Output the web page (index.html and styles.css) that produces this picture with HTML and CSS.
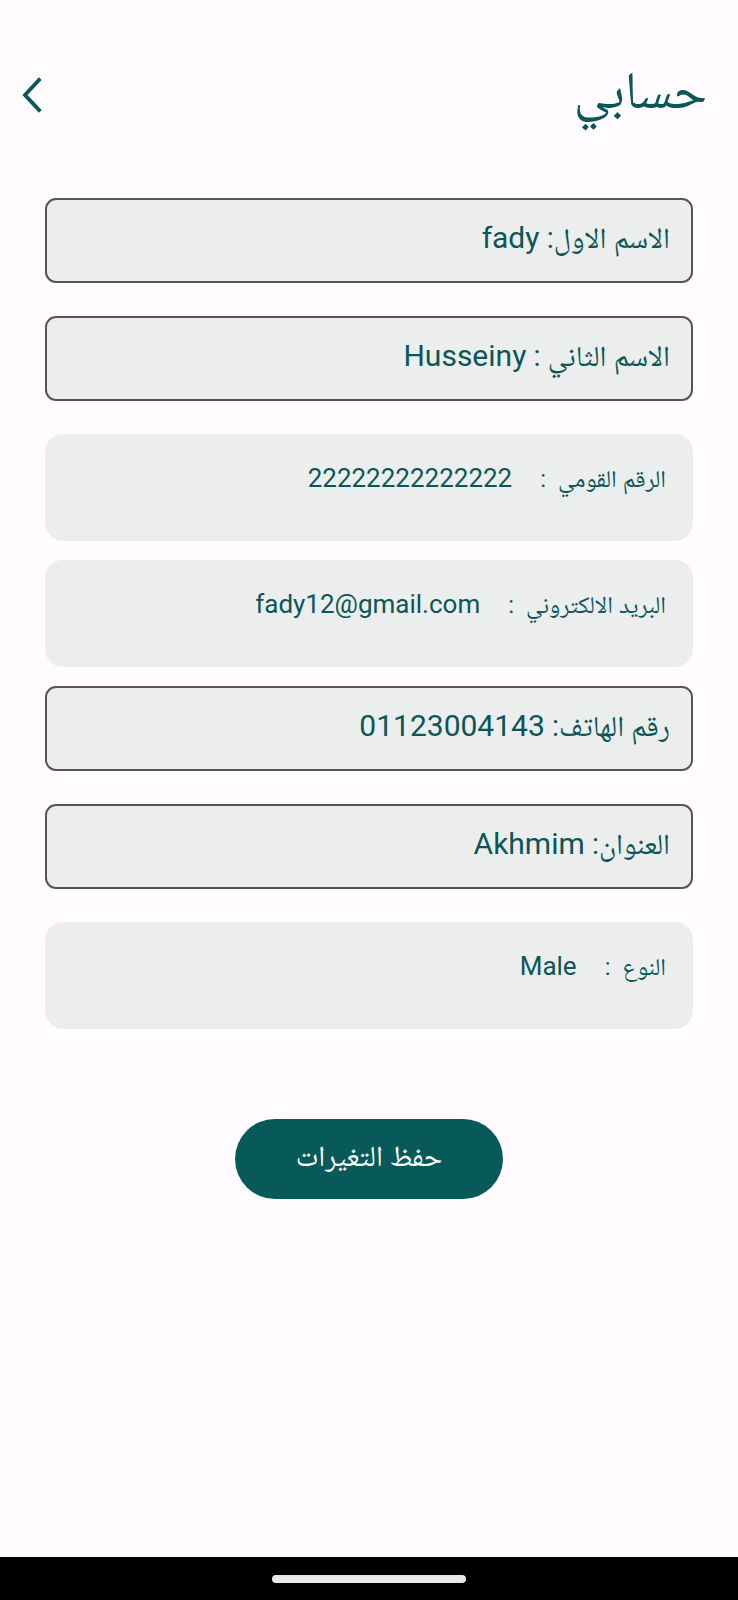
FILE: index.html
```html
<!DOCTYPE html>
<html lang="ar" dir="rtl">
<head>
<meta charset="utf-8">
<title>حسابي</title>
<link rel="stylesheet" href="styles.css">
</head>
<body>
<div class="screen">
  <div class="status-bar"></div>
  <header class="app-bar">
    <h1 class="title">حسابي</h1>
    <button class="back" aria-label="back">
      <svg width="26" height="36" viewBox="0 0 26 36"><path d="M21 3 L7 18 L21 33" fill="none" stroke="#0b5656" stroke-width="3.8" stroke-linecap="square"/></svg>
    </button>
  </header>
  <main class="fields">
    <div class="field outlined"><p class="line"><span class="label">الاسم الاول:</span> <span class="value">fady</span></p></div>
    <div class="field outlined"><p class="line"><span class="label">الاسم الثاني :</span> <span class="value">Husseiny</span></p></div>
    <div class="field filled"><p class="line"><span class="label">الرقم القومي</span><span class="colon">:</span><span class="value">22222222222222</span></p></div>
    <div class="field filled"><p class="line"><span class="label">البريد الالكتروني</span><span class="colon">:</span><span class="value">fady12@gmail.com</span></p></div>
    <div class="field outlined"><p class="line"><span class="label">رقم الهاتف:</span> <span class="value">01123004143</span></p></div>
    <div class="field outlined"><p class="line"><span class="label">العنوان:</span> <span class="value">Akhmim</span></p></div>
    <div class="field filled"><p class="line"><span class="label">النوع</span><span class="colon">:</span><span class="value">Male</span></p></div>
    <div class="actions"><button class="save">حفظ التغيرات</button></div>
  </main>
  <div class="nav-bar"><div class="handle"></div></div>
</div>
</body>
</html>
```
FILE: styles.css
```css
html, body {
  margin: 0;
  padding: 0;
  background: #fffbfe;
}
body {
  font-family: Roboto, "Noto Naskh Arabic", "Noto Sans Arabic", "DejaVu Sans", sans-serif;
  color: #0b5656;
}
.screen {
  width: 738px;
  height: 1600px;
  display: flex;
  flex-direction: column;
  overflow: hidden;
}
.status-bar {
  height: 50px;
}
.app-bar {
  height: 90px;
  display: flex;
  align-items: center;
  justify-content: space-between;
  padding: 0 31px 0 16px;
}
.title {
  margin: -10px 0 0;
  font-weight: 400;
  font-size: 53px;
  line-height: 1;
  color: #0b5656;
}
.back {
  background: none;
  border: 0;
  padding: 0;
  width: 30px;
  height: 40px;
  display: flex;
  align-items: center;
  justify-content: center;
}
.fields {
  flex: 1;
  display: flex;
  flex-direction: column;
  padding: 58px 45px 0 45px;
}
.field {
  background: #eceeed;
  display: flex;
  box-sizing: border-box;
}
.line {
  margin: 0;
  white-space: pre;
  line-height: 1.2;
}
.outlined {
  height: 85px;
  border: 2px solid #555555;
  border-radius: 11px;
  padding: 0 21px;
  align-items: center;
  font-size: 29px;
  margin-bottom: 33px;
}
.outlined .line {
  margin-top: -6px;
}
.outlined .value {
  font-size: 30px;
}
.filled {
  height: 107px;
  border-radius: 18px;
  padding: 29px 27px 0;
  align-items: flex-start;
  font-size: 24px;
  margin-bottom: 19px;
}
.filled .colon {
  margin-right: 12px;
}
.filled .value {
  font-size: 26px;
  margin-right: 28px;
}
.actions {
  display: flex;
  justify-content: center;
  margin-top: 71px;
}
.save {
  width: 268px;
  height: 80px;
  border: 0;
  border-radius: 40px;
  background: #075a59;
  color: #ffffff;
  font-family: inherit;
  font-size: 29px;
}
.nav-bar {
  height: 43px;
  background: #000;
  display: flex;
  justify-content: center;
  padding-top: 18px;
  box-sizing: border-box;
}
.handle {
  width: 194px;
  height: 8px;
  border-radius: 4px;
  background: #e8e8e8;
}
```
